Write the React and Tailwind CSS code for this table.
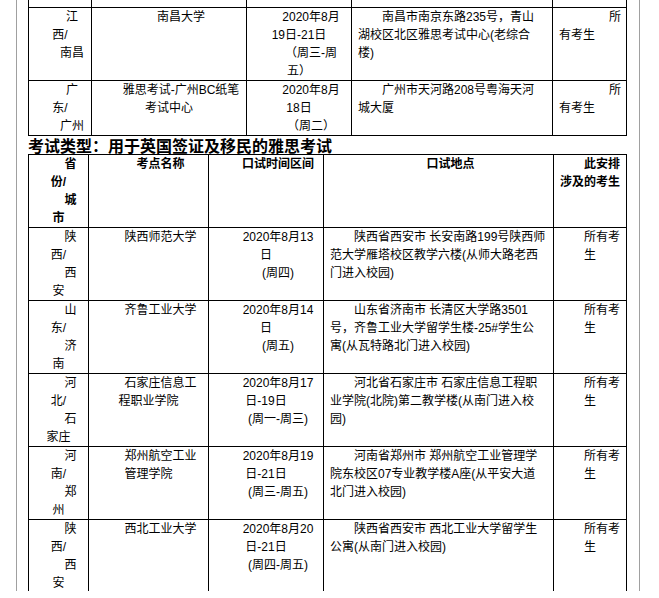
const Para = ({ lines, align = 'center', indent = 'normal', bold = false }) => {
  const alignCls = align === 'left' ? 'text-left' : 'text-center';
  const indentCls = indent === 'wide' ? 'indent-[50px]' : 'indent-[24px]';
  return (
    <div className={`${alignCls} ${indentCls} whitespace-nowrap ${bold ? 'font-bold' : ''}`}>
      {lines.map((l, i) => (
        <span key={i}>
          {l}
          {i < lines.length - 1 && <br />}
        </span>
      ))}
    </div>
  );
};

const Cell = ({ children }) => <div className="bg-white px-[6px]">{children}</div>;

const firstRows = [
  {
    city: [['江', '西/'], ['南昌']],
    site: ['南昌大学'],
    date: [['2020年8月', '19日-21日'], ['（周三-周', '五）']],
    addr: ['南昌市南京东路235号，青山', '湖校区北区雅思考试中心(老综合', '楼)'],
  },
  {
    city: [['广', '东/'], ['广州']],
    site: ['雅思考试-广州BC纸笔', '考试中心'],
    date: [['2020年8月', '18日'], ['（周二）']],
    addr: ['广州市天河路208号粤海天河', '城大厦'],
  },
];

const ukviRows = [
  {
    city: [['陕', '西/'], ['西', '安']],
    site: ['陕西师范大学'],
    date: [['2020年8月13', '日'], ['(周四)']],
    addr: ['陕西省西安市 长安南路199号陕西师', '范大学雁塔校区教学六楼(从师大路老西', '门进入校园)'],
  },
  {
    city: [['山', '东/'], ['济', '南']],
    site: ['齐鲁工业大学'],
    date: [['2020年8月14', '日'], ['(周五)']],
    addr: ['山东省济南市 长清区大学路3501', '号，齐鲁工业大学留学生楼-25#学生公', '寓(从瓦特路北门进入校园)'],
  },
  {
    city: [['河', '北/'], ['石', '家庄']],
    site: ['石家庄信息工', '程职业学院'],
    date: [['2020年8月17', '日-19日'], ['(周一-周三)']],
    addr: ['河北省石家庄市 石家庄信息工程职', '业学院(北院)第二教学楼(从南门进入校', '园)'],
  },
  {
    city: [['河', '南/'], ['郑', '州']],
    site: ['郑州航空工业', '管理学院'],
    date: [['2020年8月19', '日-21日'], ['(周三-周五)']],
    addr: ['河南省郑州市 郑州航空工业管理学', '院东校区07专业教学楼A座(从平安大道', '北门进入校园)'],
  },
  {
    city: [['陕', '西/'], ['西', '安']],
    site: ['西北工业大学'],
    date: [['2020年8月20', '日-21日'], ['(周四-周五)']],
    addr: ['陕西省西安市 西北工业大学留学生', '公寓(从南门进入校园)'],
  },
];

export default function App() {
  return (
    <div className="w-[659px] h-[598px] bg-white text-black text-[12px] leading-[18px] font-['Liberation_Sans','Noto_Sans_CJK_SC',sans-serif]">
      <div className="ml-[16px] w-[624px] h-[591px] border-x border-[#a0a0a0] overflow-hidden pl-[11px]">
        {/* tail of the previous table */}
        <div className="-mt-px w-[599px] grid grid-cols-[62px_154px_104px_200px_73px] gap-px bg-black p-px">
          {[0, 1, 2, 3, 4].map((i) => (
            <div key={i} className="bg-white h-[7px]" />
          ))}
          {firstRows.map((r, i) => (
            <div key={i} className="contents">
              <Cell>
                {r.city.map((p, j) => <Para key={j} lines={p} />)}
              </Cell>
              <Cell>
                <Para lines={r.site} />
              </Cell>
              <Cell>
                {r.date.map((p, j) => <Para key={j} lines={p} />)}
              </Cell>
              <Cell>
                <Para lines={r.addr} align="left" />
              </Cell>
              <Cell>
                <Para lines={['所', '有考生']} align="left" indent="wide" />
              </Cell>
            </div>
          ))}
        </div>

        <h2 className="h-[18px] text-[16px] leading-[18px] font-bold whitespace-nowrap font-['Noto_Sans_CJK_SC',sans-serif]">
          考试类型：用于英国签证及移民的雅思考试
        </h2>

        <div className="w-[599px] grid grid-cols-[59px_119px_114px_229px_72px] gap-px bg-black p-px">
          <Cell>
            <Para lines={['省', '份/']} bold />
            <Para lines={['城', '市']} bold />
          </Cell>
          <Cell>
            <Para lines={['考点名称']} bold />
          </Cell>
          <Cell>
            <Para lines={['口试时间区间']} bold />
          </Cell>
          <Cell>
            <Para lines={['口试地点']} bold />
          </Cell>
          <Cell>
            <Para lines={['此安排', '涉及的考生']} bold />
          </Cell>
          {ukviRows.map((r, i) => (
            <div key={i} className="contents">
              <Cell>
                {r.city.map((p, j) => <Para key={j} lines={p} />)}
              </Cell>
              <Cell>
                <Para lines={r.site} />
              </Cell>
              <Cell>
                {r.date.map((p, j) => <Para key={j} lines={p} />)}
              </Cell>
              <Cell>
                <Para lines={r.addr} align="left" />
              </Cell>
              <Cell>
                <Para lines={['所有考', '生']} />
              </Cell>
            </div>
          ))}
        </div>
      </div>
    </div>
  );
}
